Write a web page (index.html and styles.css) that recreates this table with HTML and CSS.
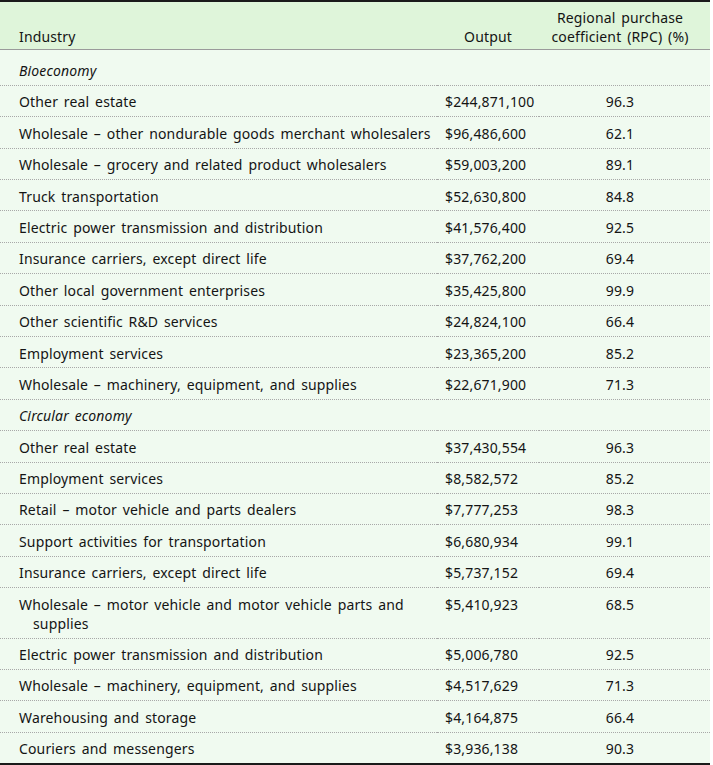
FILE: index.html
```html
<!DOCTYPE html>
<html>
<head>
<meta charset="utf-8">
<link rel="stylesheet" href="styles.css">
</head>
<body>
<table class="tbl">
  <colgroup>
    <col class="c-ind">
    <col class="c-out">
    <col class="c-rpc">
  </colgroup>
  <thead>
    <tr>
      <th class="h-ind">Industry</th>
      <th class="h-out">Output</th>
      <th class="h-rpc">Regional purchase<br>coefficient (RPC) (%)</th>
    </tr>
  </thead>
  <tbody>
    <tr class="cat first"><td colspan="3"><em>Bioeconomy</em></td></tr>
    <tr><td>Other real estate</td><td class="out">$244,871,100</td><td class="rpc">96.3</td></tr>
    <tr><td>Wholesale – other nondurable goods merchant wholesalers</td><td class="out">$96,486,600</td><td class="rpc">62.1</td></tr>
    <tr><td>Wholesale – grocery and related product wholesalers</td><td class="out">$59,003,200</td><td class="rpc">89.1</td></tr>
    <tr><td>Truck transportation</td><td class="out">$52,630,800</td><td class="rpc">84.8</td></tr>
    <tr><td>Electric power transmission and distribution</td><td class="out">$41,576,400</td><td class="rpc">92.5</td></tr>
    <tr><td>Insurance carriers, except direct life</td><td class="out">$37,762,200</td><td class="rpc">69.4</td></tr>
    <tr><td>Other local government enterprises</td><td class="out">$35,425,800</td><td class="rpc">99.9</td></tr>
    <tr><td>Other scientific R&amp;D services</td><td class="out">$24,824,100</td><td class="rpc">66.4</td></tr>
    <tr><td>Employment services</td><td class="out">$23,365,200</td><td class="rpc">85.2</td></tr>
    <tr><td>Wholesale – machinery, equipment, and supplies</td><td class="out">$22,671,900</td><td class="rpc">71.3</td></tr>
    <tr class="cat"><td colspan="3"><em>Circular economy</em></td></tr>
    <tr><td>Other real estate</td><td class="out">$37,430,554</td><td class="rpc">96.3</td></tr>
    <tr><td>Employment services</td><td class="out">$8,582,572</td><td class="rpc">85.2</td></tr>
    <tr><td>Retail – motor vehicle and parts dealers</td><td class="out">$7,777,253</td><td class="rpc">98.3</td></tr>
    <tr><td>Support activities for transportation</td><td class="out">$6,680,934</td><td class="rpc">99.1</td></tr>
    <tr><td>Insurance carriers, except direct life</td><td class="out">$5,737,152</td><td class="rpc">69.4</td></tr>
    <tr><td>Wholesale – motor vehicle and motor vehicle parts and supplies</td><td class="out">$5,410,923</td><td class="rpc">68.5</td></tr>
    <tr><td>Electric power transmission and distribution</td><td class="out">$5,006,780</td><td class="rpc">92.5</td></tr>
    <tr><td>Wholesale – machinery, equipment, and supplies</td><td class="out">$4,517,629</td><td class="rpc">71.3</td></tr>
    <tr><td>Warehousing and storage</td><td class="out">$4,164,875</td><td class="rpc">66.4</td></tr>
    <tr><td>Couriers and messengers</td><td class="out">$3,936,138</td><td class="rpc">90.3</td></tr>
  </tbody>
</table>
</body>
</html>
```
FILE: styles.css
```css
html, body {
  margin: 0;
  padding: 0;
  background: #ffffff;
}
body {
  font-family: "Noto Sans", "Open Sans", sans-serif;
  font-size: 14px;
  color: #141414;
  word-spacing: 2px;
  letter-spacing: 0.15px;
}
.tbl {
  width: 710px;
  border-collapse: collapse;
  table-layout: fixed;
  border-top: 2px solid #1a1a1a;
  border-bottom: 2px solid #1a1a1a;
  background: #f0faf0;
}
.c-ind { width: 437px; }
.c-out { width: 102px; }
.c-rpc { width: 171px; }
thead tr {
  background: #dff5da;
  border-bottom: 1px solid #9a9a9a;
}
th {
  font-weight: normal;
  vertical-align: bottom;
  line-height: 19px;
  padding: 6px 8px 3px 8px;
}
.h-ind { text-align: left; padding-left: 19px; }
.h-out { text-align: center; }
.h-rpc { text-align: center; padding-right: 17px; }
td {
  line-height: 19px;
  padding: 6.5px 8px 4.9px 8px;
  vertical-align: top;
}
tbody tr {
  border-bottom: 1px dotted #a8a8a8;
}
tbody tr:last-child { border-bottom: none; }
td:first-child {
  padding-left: 33px;
  text-indent: -14px;
  padding-right: 4px;
}
.cat td { padding-left: 33px; }
.cat.first td { padding-top: 11px; }
.cat em { font-style: italic; }
.out { text-align: left; }
.rpc { text-align: center; padding-right: 17px; }
```
